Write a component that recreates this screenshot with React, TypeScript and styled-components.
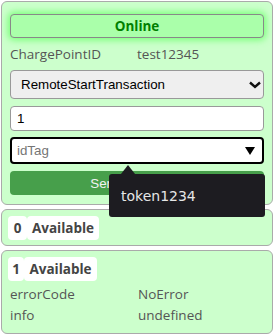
import React from 'react';
import styled, { createGlobalStyle } from 'styled-components';

const GlobalStyle = createGlobalStyle`
  body {
    margin: 0;
    font-family: "Open Sans", sans-serif;
    background: #ffffff;
  }
`;

const Page = styled.div`
  display: flex;
  flex-direction: column;
  gap: 4px;
  padding: 1px 2px 0 1px;
`;

const Card = styled.div<{ $pad: string }>`
  display: flex;
  flex-direction: column;
  background: #ccffcc;
  border: 1px solid #aaaaaa;
  border-radius: 6px;
  padding: ${(p) => p.$pad};
`;

const Controls = styled.div`
  display: flex;
  flex-direction: column;
  gap: 6px;
`;

const OnlineBadge = styled.div`
  height: 24px;
  box-sizing: border-box;
  display: flex;
  align-items: center;
  justify-content: center;
  background: #aaffaa;
  border: 1px solid #888888;
  border-radius: 4px;
  box-shadow: 0 0 7px 2px #77ff77;
  color: #008000;
  font-weight: 700;
  font-size: 13.5px;
`;

const InfoRow = styled.div<{ $h: number }>`
  display: grid;
  grid-template-columns: 1fr 1fr;
  align-items: center;
  height: ${(p) => p.$h}px;
  padding-left: ${(p) => (p.$h > 20 ? 2 : 0)}px;
  color: #555555;
  font-size: 13.5px;
`;

const SelectBox = styled.div`
  height: 29px;
  box-sizing: border-box;
  display: flex;
  align-items: center;
  justify-content: space-between;
  padding: 0 1px 0 10px;
  background: #efefef;
  border: 1px solid #999999;
  border-radius: 4px;
  font-family: "Liberation Sans", Arial, sans-serif;
  font-size: 13.33px;
  color: #000000;
`;

const TextField = styled.div`
  height: 25px;
  box-sizing: border-box;
  display: flex;
  align-items: center;
  padding: 0 6px;
  margin-top: 1px;
  background: #ffffff;
  border: 1px solid #999999;
  border-radius: 4px;
  font-family: "Liberation Sans", Arial, sans-serif;
  font-size: 13.33px;
  color: #000000;
`;

const ComboWrap = styled.div`
  position: relative;
`;

const Combo = styled.div`
  height: 27px;
  box-sizing: border-box;
  display: flex;
  align-items: center;
  justify-content: space-between;
  padding: 0 7px 0 5px;
  background: #ffffff;
  border: 2px solid #000000;
  border-radius: 4px;
  font-family: "Liberation Sans", Arial, sans-serif;
  font-size: 13.33px;
  color: #757575;
`;

const Tooltip = styled.div`
  position: absolute;
  top: 37px;
  left: 99px;
  width: 156px;
  height: 43px;
  box-sizing: border-box;
  display: flex;
  align-items: center;
  padding-left: 12px;
  background: #1d1c21;
  border-radius: 3px;
  color: #e6e6e6;
  font-family: "DejaVu Sans", sans-serif;
  font-size: 14px;
  z-index: 2;

  &::before {
    content: '';
    position: absolute;
    top: -9px;
    left: 12px;
    border-left: 7px solid transparent;
    border-right: 7px solid transparent;
    border-bottom: 9px solid #1d1c21;
  }
`;

const SendButton = styled.button`
  height: 24px;
  margin-top: 1px;
  border: none;
  border-radius: 4px;
  background: #479f4b;
  color: #f2f2f2;
  font-family: "Liberation Sans", Arial, sans-serif;
  font-size: 13.33px;
`;

const StatusLine = styled.div<{ $mb: number }>`
  display: flex;
  margin-bottom: ${(p) => p.$mb}px;
`;

const StatusChip = styled.span<{ $w: number }>`
  width: ${(p) => p.$w}px;
  height: 24px;
  display: flex;
  align-items: center;
  justify-content: center;
  background: #ffffff;
  border-radius: 4px;
  color: #444444;
  font-weight: 700;
  font-size: 13.5px;
`;

const ChevronDown = () => (
  <svg width="14" height="10" viewBox="0 0 14 10">
    <path d="M2 2.5 L7 7 L12 2.5" fill="none" stroke="#111" strokeWidth="2.4" />
  </svg>
);

const Caret = () => (
  <svg width="10" height="8" viewBox="0 0 10 8">
    <path d="M0 0 H10 L5 8 Z" fill="#000" />
  </svg>
);

const connectors = [
  { id: 0, status: 'Available', idW: 19, statusW: 72, details: [] as [string, string][] },
  {
    id: 1,
    status: 'Available',
    idW: 16,
    statusW: 73,
    details: [
      ['errorCode', 'NoError'],
      ['info', 'undefined'],
    ] as [string, string][],
  },
];

export default function App() {
  return (
    <>
      <GlobalStyle />
      <Page>
        <Card $pad="12px 8px 9px">
          <Controls>
            <OnlineBadge>Online</OnlineBadge>
            <InfoRow $h={20}>
              <span>ChargePointID</span>
              <span>test12345</span>
            </InfoRow>
            <SelectBox>
              <span>RemoteStartTransaction</span>
              <ChevronDown />
            </SelectBox>
            <TextField>1</TextField>
            <ComboWrap>
              <Combo>
                <span>idTag</span>
                <Caret />
              </Combo>
              <Tooltip>token1234</Tooltip>
            </ComboWrap>
            <SendButton>Send command</SendButton>
          </Controls>
        </Card>
        {connectors.map((c) => (
          <Card key={c.id} $pad={c.details.length ? '6px 6px 8px' : '6px 6px 5px'}>
            <StatusLine $mb={c.details.length ? 2 : 0}>
              <StatusChip $w={c.idW}>{c.id}</StatusChip>
              <StatusChip $w={c.statusW}>{c.status}</StatusChip>
            </StatusLine>
            {c.details.map(([k, v]) => (
              <InfoRow key={k} $h={21}>
                <span>{k}</span>
                <span>{v}</span>
              </InfoRow>
            ))}
          </Card>
        ))}
      </Page>
    </>
  );
}
